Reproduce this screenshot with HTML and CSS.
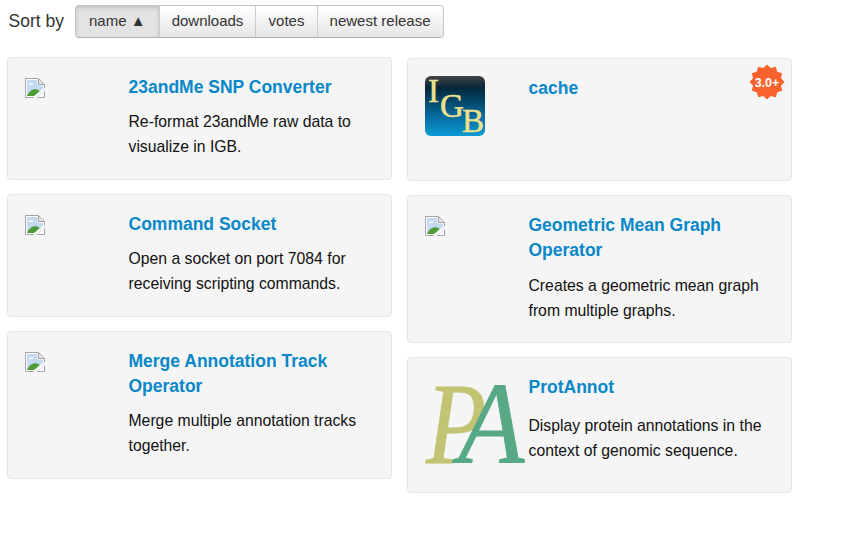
FILE: index.html
```html
<!DOCTYPE html>
<html lang="en">
<head>
    <meta charset="UTF-8">
    <meta name="viewport" content="width=device-width, initial-scale=1.0">
    <title>Apps</title>
    <link rel="stylesheet" href="styles.css">
</head>
<body>
    <svg class="sprites" width="0" height="0">
        <symbol id="broken" viewBox="0 0 20 20">
            <path d="M.5.5H13.500L19.500 6.500V19.500H.5Z" fill="#fff" stroke="#a3a3a3"/>
            <path d="M2 2H12.500V7.500H18V15L14 18H2Z" fill="#c5d9f3"/>
            <path d="M4 5.500h4v1.500H4Z" fill="#fff"/>
            <path d="M2 18C4 13 8 10.500 12 11.500L15 13 10 18Z" fill="#4f9b37"/>
            <path d="M13.500 1V6.500H19" fill="#e6e6e6" stroke="#a3a3a3"/>
            <path d="M9 20 20 11" stroke="#f5f5f5" stroke-width="3"/>
        </symbol>
    </svg>

    <div class="sort-row">
        <span class="sort-label">Sort by</span>
        <div class="btn-group">
            <button class="btn active">name ▲</button>
            <button class="btn">downloads</button>
            <button class="btn">votes</button>
            <button class="btn">newest release</button>
        </div>
    </div>

    <div class="columns">
        <div class="column">
            <div class="well">
                <div class="media"><svg class="broken"><use href="#broken"/></svg></div>
                <div class="info">
                    <h4><a href="#">23andMe SNP Converter</a></h4>
                    <p>Re-format 23andMe raw data to visualize in IGB.</p>
                </div>
            </div>
            <div class="well">
                <div class="media"><svg class="broken"><use href="#broken"/></svg></div>
                <div class="info">
                    <h4><a href="#">Command Socket</a></h4>
                    <p>Open a socket on port 7084 for receiving scripting commands.</p>
                </div>
            </div>
            <div class="well">
                <div class="media"><svg class="broken"><use href="#broken"/></svg></div>
                <div class="info">
                    <h4><a href="#">Merge Annotation Track Operator</a></h4>
                    <p>Merge multiple annotation tracks together.</p>
                </div>
            </div>
        </div>

        <div class="column right">
            <div class="well tall">
                <div class="media">
                    <svg class="logo-igb" width="60" height="60" viewBox="0 0 60 60">
                        <defs>
                            <linearGradient id="igb-bg" x1="0" y1="0" x2="0" y2="1">
                                <stop offset="0" stop-color="#444"/>
                                <stop offset="0.2" stop-color="#03263a"/>
                                <stop offset="0.65" stop-color="#05689a"/>
                                <stop offset="1" stop-color="#0a9ad6"/>
                            </linearGradient>
                        </defs>
                        <rect width="60" height="60" rx="6" fill="url(#igb-bg)"/>
                        <text class="igb-letter" x="3" y="26">I</text>
                        <text class="igb-letter" x="15" y="41">G</text>
                        <text class="igb-letter" x="37" y="56">B</text>
                    </svg>
                </div>
                <div class="info">
                    <h4><a href="#">cache</a></h4>
                </div>
                <svg class="badge" width="36" height="36" viewBox="0 0 36 36">
                    <polygon fill="#f9622d" points="18,.5 21.750,4 26.750,2.840 28.250,7.750 33.160,9.250 32,14.250 35.500,18 32,21.750 33.160,26.750 28.250,28.250 26.750,33.160 21.750,32 18,35.500 14.250,32 9.250,33.160 7.750,28.250 2.840,26.750 4,21.750 .5,18 4,14.250 2.840,9.250 7.750,7.750 9.250,2.840 14.250,4"/>
                    <text class="badge-text" x="18" y="22.500">3.0+</text>
                </svg>
            </div>
            <div class="well">
                <div class="media"><svg class="broken"><use href="#broken"/></svg></div>
                <div class="info">
                    <h4><a href="#">Geometric Mean Graph Operator</a></h4>
                    <p>Creates a geometric mean graph from multiple graphs.</p>
                </div>
            </div>
            <div class="well">
                <div class="media">
                    <svg class="logo-pa" width="100" height="100" viewBox="0 0 100 100">
                        <text class="pa-p" transform="translate(1 88) scale(.85 1)">P</text>
                        <text class="pa-a" transform="translate(33.500 88) scale(.93 1)">A</text>
                    </svg>
                </div>
                <div class="info wide-gap">
                    <h4><a href="#">ProtAnnot</a></h4>
                    <p>Display protein annotations in the context of genomic sequence.</p>
                </div>
            </div>
        </div>
    </div>
</body>
</html>
```

FILE: styles.css
```css
* {
    box-sizing: border-box;
}
html, body {
    margin: 0;
    padding: 0;
}
body {
    padding: 5px 0 0 7px;
    font-family: "Liberation Sans", Arial, sans-serif;
    font-size: 15.75px;
    line-height: 25px;
    color: #111;
    background: #fff;
}
.sprites {
    position: absolute;
}
.sort-row {
    display: flex;
    align-items: center;
    height: 33px;
    margin-bottom: 19px;
}
.sort-label {
    width: 68px;
    padding-left: 1.5px;
    font-size: 17.5px;
    color: #333;
}
.btn-group {
    display: flex;
    height: 33px;
    border: 1px solid #c4c4c4;
    border-bottom-color: #b0b0b0;
    border-radius: 4px;
    overflow: hidden;
}
.btn {
    margin: 0;
    padding: 0 12.1px 2px;
    border: 0;
    border-left: 1px solid #ccc;
    background: linear-gradient(#fff, #e6e6e6);
    font-family: inherit;
    font-size: 15px;
    color: #333;
}
.btn:first-child {
    border-left: 0;
}
.btn.active {
    padding: 0 13px 2px;
    background: #e3e3e3;
    box-shadow: inset 0 2px 4px rgba(0, 0, 0, 0.15);
}
.columns {
    display: flex;
    gap: 15px;
    align-items: flex-start;
}
.column {
    display: flex;
    flex-direction: column;
    gap: 14px;
    width: 385px;
}
.column.right {
    margin-top: 1px;
}
.well {
    position: relative;
    display: flex;
    padding: 17px;
    border: 1px solid #e6e6e6;
    border-radius: 4px;
    background: #f5f5f5;
}
.well.tall {
    min-height: 123px;
}
.media {
    flex: 0 0 104px;
}
.broken {
    display: block;
    width: 20px;
    height: 20px;
    margin-top: 3px;
}
.logo-igb, .logo-pa {
    display: block;
    overflow: visible;
}
.info {
    flex: 1;
    margin-left: -0.5px;
}
h4 {
    margin: 0 0 9px;
    font-size: 17.5px;
    line-height: 25px;
    font-weight: bold;
}
h4 a {
    color: #0887c9;
    text-decoration: none;
}
p {
    margin: 0 0 3px;
}
.wide-gap h4 {
    margin-bottom: 13px;
}
.column.right .well:nth-child(2) h4 {
    margin-bottom: 10px;
}
.column.right .well:nth-child(2) p {
    margin-bottom: 2px;
}
.badge {
    position: absolute;
    top: 5px;
    right: 6px;
}
.badge-text {
    font-size: 12.5px;
    font-weight: bold;
    fill: #fff;
    text-anchor: middle;
}
.igb-letter {
    font-family: "Liberation Serif", serif;
    font-size: 33px;
    fill: #ece28e;
    stroke: #ece28e;
    stroke-width: 0.5px;
}
.pa-p, .pa-a {
    font-family: "Liberation Serif", serif;
    font-style: italic;
    font-size: 116px;
    stroke-width: 0.8px;
}
.pa-p {
    fill: #c2c473;
    stroke: #c2c473;
}
.pa-a {
    fill: #57a985;
    stroke: #57a985;
}
```
